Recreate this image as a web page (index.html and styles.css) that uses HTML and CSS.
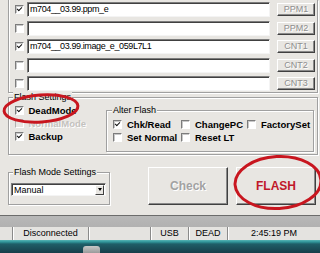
FILE: index.html
```html
<!DOCTYPE html>
<html>
<head>
<meta charset="utf-8">
<link rel="stylesheet" href="styles.css">
</head>
<body>
<div class="files">
  <div class="row"><span class="cb on"></span><div class="field">m704__03.99.ppm_e</div><div class="btn">PPM1</div></div>
  <div class="row"><span class="cb"></span><div class="field"></div><div class="btn">PPM2</div></div>
  <div class="row"><span class="cb on"></span><div class="field">m704__03.99.image_e_059L7L1</div><div class="btn">CNT1</div></div>
  <div class="row"><span class="cb"></span><div class="field"></div><div class="btn">CNT2</div></div>
  <div class="row"><span class="cb"></span><div class="field"></div><div class="btn">CNT3</div></div>
</div>

<div class="group settings">
  <span class="legend">Flash Settings</span>
  <div class="left-col">
    <div class="opt"><span class="cb on"></span>DeadMode</div>
    <div class="opt dis"><span class="cb"></span>NormalMode</div>
    <div class="opt"><span class="cb on"></span>Backup</div>
  </div>
  <div class="group after">
    <span class="legend">Alter Flash</span>
    <div class="opts-grid">
      <div class="opt"><span class="cb on"></span>Chk/Read</div>
      <div class="opt"><span class="cb"></span>ChangePC</div>
      <div class="opt"><span class="cb"></span>FactorySet</div>
      <div class="opt"><span class="cb"></span>Set Normal</div>
      <div class="opt"><span class="cb"></span>Reset LT</div>
    </div>
  </div>
</div>

<div class="actions">
  <div class="group mode">
    <span class="legend">Flash Mode Settings</span>
    <div class="select"><span>Manual</span><span class="arrow"></span></div>
  </div>
  <div class="bigbtn check">Check</div>
  <div class="bigbtn flash">FLASH</div>
</div>

<div class="status">
  <div class="panels">
    <div class="p w1"></div>
    <div class="p w2">Disconnected</div>
    <div class="p w3"></div>
    <div class="p w4">USB</div>
    <div class="p w5">DEAD</div>
    <div class="p w6">2:45:19 PM</div>
  </div>
</div>
<div class="taskbar"><div class="tb-icon"></div></div>

<svg class="marks" width="320" height="253" viewBox="0 0 320 253">
  <ellipse cx="41" cy="108.5" rx="37" ry="13.5" transform="rotate(-4 41 108.5)" fill="none" stroke="#c8161f" stroke-width="3"/>
  <ellipse cx="278" cy="182.5" rx="43" ry="26" transform="rotate(-3 278 182.5)" fill="none" stroke="#c8161f" stroke-width="3"/>
</svg>
</body>
</html>
```

FILE: styles.css
```css
* { box-sizing: border-box; margin: 0; padding: 0; }
html, body { width: 320px; height: 253px; overflow: hidden; }
body {
  background: #e8e6e2;
  font-family: "Liberation Sans", Arial, sans-serif;
  font-size: 9px;
  color: #000;
  position: relative;
}

/* top file rows */
.files {
  margin-left: 8px;
  width: 310px;
  height: 93px;
  border: 1px solid #a0a0a0;
  border-top: 0;
  box-shadow: inset 1px 0 0 #fff, 1px 1px 0 #fff;
  padding: 2px 0 0 6px;
  display: flex;
  flex-direction: column;
  gap: 3.5px;
}
.row { display: flex; align-items: center; height: 15px; }

.cb {
  flex: none;
  position: relative;
  width: 9px;
  height: 9px;
  background: #fff;
  border: 1px solid;
  border-color: #7c7c7c #fff #fff #7c7c7c;
  box-shadow: inset 1px 1px 0 #c8c8c8;
}
.cb.on::after {
  content: "";
  position: absolute;
  left: 1px;
  top: 0.5px;
  width: 4px;
  height: 2px;
  border-left: 1.5px solid #111;
  border-bottom: 1.5px solid #111;
  transform: rotate(-45deg);
}

.field {
  margin-left: 3px;
  width: 243px;
  height: 15px;
  background: #fff;
  border: 1px solid;
  border-color: #7c7c7c #f4f4f4 #f4f4f4 #7c7c7c;
  box-shadow: inset 1px 1px 0 #404040;
  padding-left: 2px;
  line-height: 13px;
  letter-spacing: -0.4px;
  white-space: nowrap;
  overflow: hidden;
}
.btn {
  margin-left: 7px;
  width: 38px;
  height: 13px;
  background: #e8e6e2;
  border: 1px solid;
  border-color: #fff #404040 #404040 #fff;
  box-shadow: inset -1px -1px 0 #8a8a8a;
  color: #8e8e8e;
  text-shadow: 1px 1px 0 #fff;
  text-align: center;
  line-height: 11px;
}

/* group boxes */
.group {
  position: relative;
  border: 1px solid #a0a0a0;
  box-shadow: inset 1px 1px 0 #fff, 1px 1px 0 #fff;
}
.legend {
  position: absolute;
  top: -6px;
  left: 4px;
  padding: 0 1px;
  background: #e8e6e2;
  line-height: 11px;
  white-space: nowrap;
}

.settings {
  margin: 4px 0 0 8px;
  width: 310px;
  height: 58px;
  display: flex;
  padding-left: 6px;
}
.left-col {
  flex: 0 0 91px;
  padding-top: 6px;
}
.opt {
  display: flex;
  align-items: center;
  gap: 4.5px;
  height: 13px;
  font-weight: bold;
  font-size: 9.5px;
  white-space: nowrap;
}
.opt.dis { color: #c4c2be; text-shadow: 1px 1px 0 #fff; }
.opt.dis .cb { background: #e8e6e2; border-color: #b0b0b0 #fff #fff #b0b0b0; box-shadow: none; }

.after {
  margin-top: 12px;
  width: 208px;
  height: 42px;
  padding: 7px 0 0 6px;
}
.after .legend { left: 5px; font-weight: normal; }
.opts-grid {
  display: grid;
  grid-template-columns: 68px 66px auto;
}
.after .opt { gap: 5px; }

/* bottom actions */
.actions {
  margin-top: 12px;
  height: 38px;
  display: flex;
}
.mode {
  margin: 5px 0 0 8px;
  width: 102px;
  height: 33px;
  padding: 10px 0 0 2px;
}
.select {
  width: 95px;
  height: 13px;
  background: #fff;
  border: 1px solid;
  border-color: #7c7c7c #f4f4f4 #f4f4f4 #7c7c7c;
  box-shadow: inset 1px 1px 0 #404040;
  display: flex;
  align-items: center;
  padding-left: 2px;
}
.arrow {
  position: relative;
  margin-left: auto;
  margin-right: 1px;
  width: 9px;
  height: 10px;
  background: #e8e6e2;
  border: 1px solid;
  border-color: #fff #404040 #404040 #fff;
}
.arrow::after {
  content: "";
  position: absolute;
  left: 1.5px;
  top: 2.5px;
  border-left: 2.5px solid transparent;
  border-right: 2.5px solid transparent;
  border-top: 3px solid #000;
}

.bigbtn {
  width: 80px;
  height: 38px;
  border: 1px solid;
  border-color: #fff #404040 #404040 #fff;
  box-shadow: inset -1px -1px 0 #8a8a8a;
  display: flex;
  align-items: center;
  justify-content: center;
  font-weight: bold;
  font-size: 12px;
}
.check { margin-left: 38px; color: #a2a2a2; text-shadow: 1px 1px 0 #fff; }
.flash { margin-left: 8px; color: #c0182a; }

/* status bar */
.status {
  margin-top: 10px;
  border-top: 1px solid #6c6c6c;
  background: linear-gradient(#b8b8b8, #a8a8a8);
  padding-top: 11px;
}
.panels {
  display: flex;
  height: 13px;
  background: #e4e3e0;
}
.p {
  height: 13px;
  border-left: 1px solid #8a8a8a;
  box-shadow: inset 1px 0 0 #fff;
  text-align: center;
  line-height: 13px;
  white-space: nowrap;
}
.w1 { width: 12px; border-left: 0; box-shadow: none; }
.w2 { width: 76px; }
.w3 { width: 62px; }
.w4 { width: 38px; }
.w5 { width: 39px; }
.w6 { width: 93px; }

.taskbar {
  height: 13px;
  background: linear-gradient(#57b4b4 0, #2f9499 2px, #1f5e68 4px, #173e4a 100%);
  padding-top: 6px;
}
.tb-icon {
  margin-left: 83px;
  width: 17px;
  height: 7px;
  background: linear-gradient(#c8c8c8, #9a9a9a);
  border-radius: 3px 3px 0 0;
}

.marks {
  position: absolute;
  top: 0;
  left: 0;
  pointer-events: none;
}
```
